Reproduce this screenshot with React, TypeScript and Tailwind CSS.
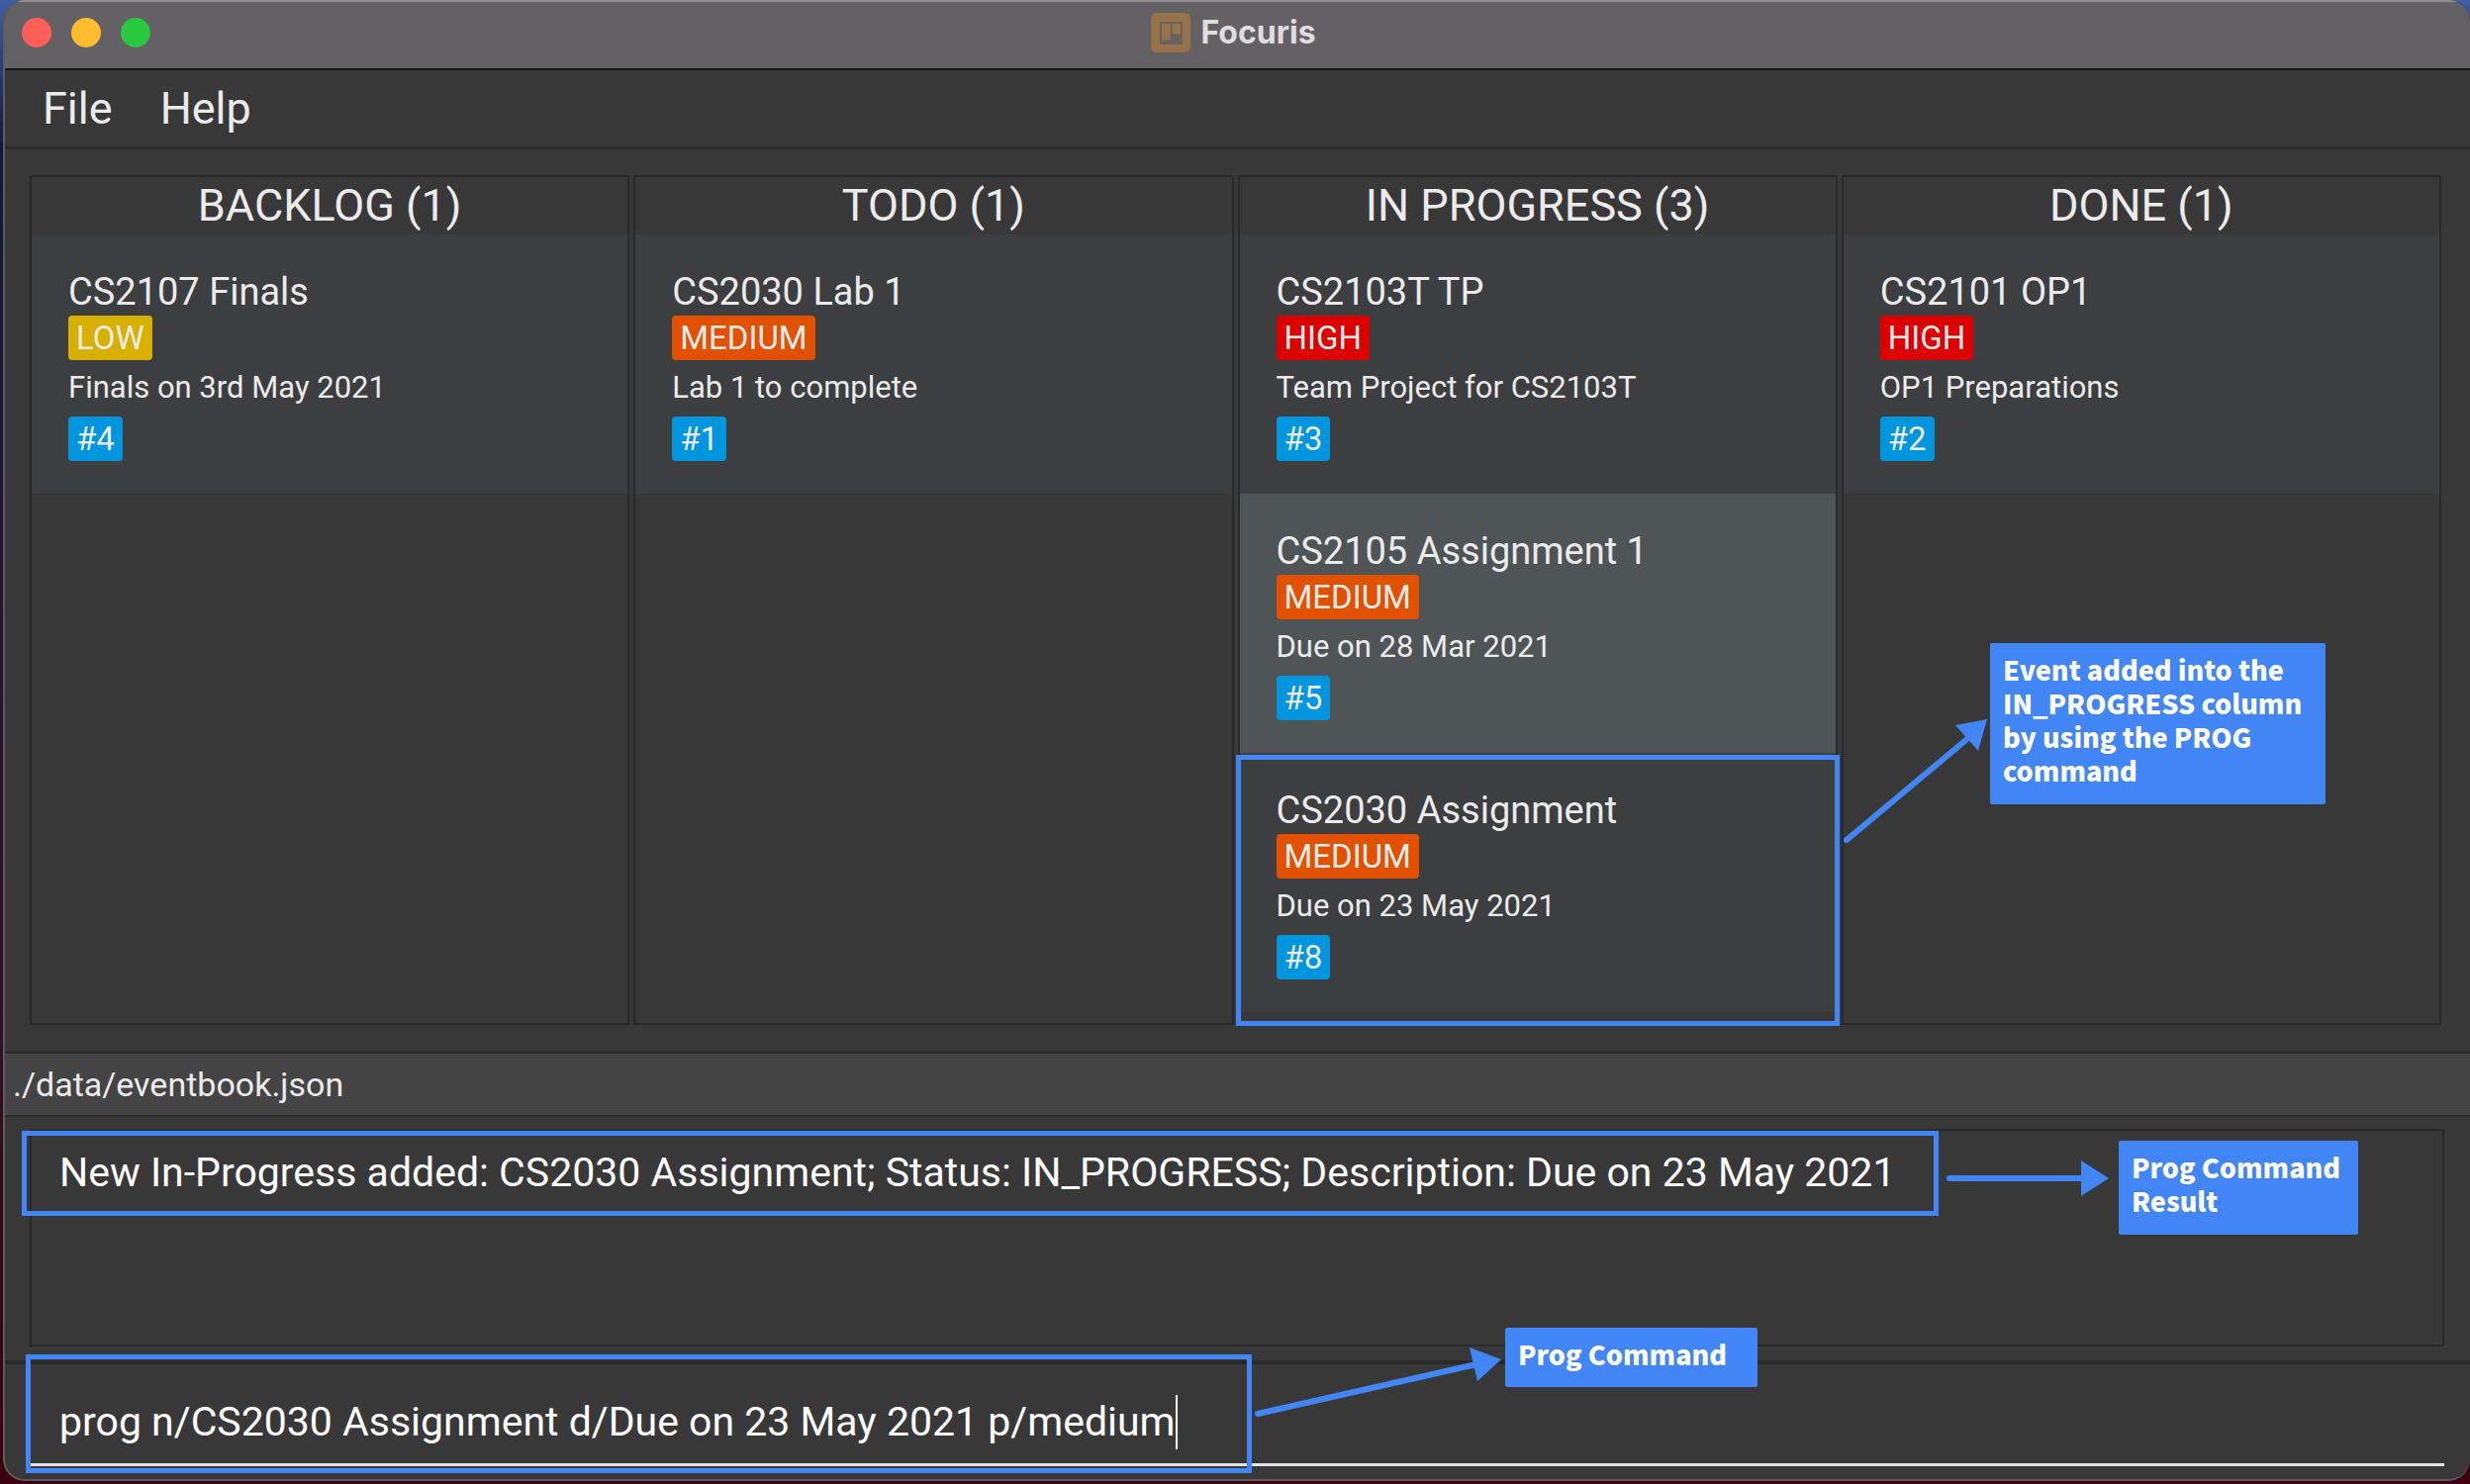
import type { ReactNode } from "react";

type Priority = "LOW" | "MEDIUM" | "HIGH";

interface EventItem {
  id: number;
  name: string;
  priority: Priority;
  description: string;
  selected?: boolean;
  highlighted?: boolean;
}

const columns: { title: string; events: EventItem[] }[] = [
  {
    title: "BACKLOG",
    events: [{ id: 4, name: "CS2107 Finals", priority: "LOW", description: "Finals on 3rd May 2021" }],
  },
  {
    title: "TODO",
    events: [{ id: 1, name: "CS2030 Lab 1", priority: "MEDIUM", description: "Lab 1 to complete" }],
  },
  {
    title: "IN PROGRESS",
    events: [
      { id: 3, name: "CS2103T TP", priority: "HIGH", description: "Team Project for CS2103T" },
      { id: 5, name: "CS2105 Assignment 1", priority: "MEDIUM", description: "Due on 28 Mar 2021", selected: true },
      { id: 8, name: "CS2030 Assignment", priority: "MEDIUM", description: "Due on 23 May 2021", highlighted: true },
    ],
  },
  {
    title: "DONE",
    events: [{ id: 2, name: "CS2101 OP1", priority: "HIGH", description: "OP1 Preparations" }],
  },
];

const priorityColor: Record<Priority, string> = {
  LOW: "bg-[#d8b100]",
  MEDIUM: "bg-[#e25100]",
  HIGH: "bg-[#dc0000]",
};

function Badge({ color, children }: { color: string; children: ReactNode }) {
  return <span className={`block w-fit rounded px-2 text-[33px] leading-[45px] ${color}`}>{children}</span>;
}

function EventCard({ event }: { event: EventItem }) {
  return (
    <li className={`relative px-[37px] pt-9 pb-[33px] ${event.selected ? "bg-[#4f5557]" : "bg-[#3c3e3f]"}`}>
      <h3 className="mb-0.5 text-[38px] leading-[44px]">{event.name}</h3>
      <Badge color={priorityColor[event.priority]}>{event.priority}</Badge>
      <p className="mb-0.5 text-[31px] leading-[55px]">{event.description}</p>
      <Badge color="bg-[#0096df]">#{event.id}</Badge>
      {event.highlighted && (
        <div className="absolute -inset-x-1 top-0.5 -bottom-3.5 border-[5px] border-[#4286f5]" />
      )}
    </li>
  );
}

function Callout({ className, children }: { className: string; children: ReactNode }) {
  return (
    <p
      className={`absolute rounded-xs bg-[#4286f5] px-[13px] pt-2.5 font-['Noto_Sans_CJK_SC',sans-serif] text-[27px] leading-[34px] font-black text-white ${className}`}
    >
      {children}
    </p>
  );
}

function AppIcon() {
  return (
    <svg viewBox="0 0 40 40" className="size-10" aria-hidden="true">
      <rect width="40" height="40" rx="6" fill="#96734a" />
      <rect x="9" y="9" width="23" height="23" fill="#68625f" />
      <rect x="11" y="11" width="8.5" height="16.5" fill="#96734a" />
      <rect x="21.5" y="11" width="8.5" height="10.5" fill="#96734a" />
    </svg>
  );
}

export default function App() {
  return (
    <div className="flex min-h-screen flex-col bg-linear-to-b from-[#3f5fa3] via-[#12173f] via-10% to-[#3d0010] pb-[3px] pl-[3px] font-[Roboto,sans-serif] text-[#ebebeb]">
      <div className="flex flex-1 flex-col overflow-hidden rounded-[22px] border-b-2 border-l-2 border-[#5c5c5c] bg-[#383838]">
        <header className="relative flex h-[71px] items-center justify-center border-t-2 border-b-2 border-t-[#929093] border-b-[#171717] bg-[#646164] pr-2 pb-1.5">
          <div className="absolute left-[17px] flex gap-5">
            <button aria-label="Close" className="size-[30px] rounded-full bg-[#ff5f57]" />
            <button aria-label="Minimize" className="size-[30px] rounded-full bg-[#febc2e]" />
            <button aria-label="Maximize" className="size-[30px] rounded-full bg-[#28c840]" />
          </div>
          <h1 className="flex items-center gap-2.5 font-[Inter,sans-serif] text-[32px] font-bold text-[#dfdde0]">
            <AppIcon />
            Focuris
          </h1>
        </header>

        <nav className="flex h-20 items-center gap-12 border-b-[3px] border-[#2c2c2c] pl-[38px] text-[45px]">
          <button>File</button>
          <button>Help</button>
        </nav>

        <main className="relative grid flex-1 grid-cols-4 gap-1 pt-[26px] pr-[29px] pb-[26px] pl-[25px]">
          {columns.map((column) => (
            <section key={column.title} className="border-2 border-[#2a2a2a]">
              <h2 className="text-center text-[45px] leading-[58px]">
                {column.title} ({column.events.length})
              </h2>
              <ul>
                {column.events.map((event) => (
                  <EventCard key={event.id} event={event} />
                ))}
              </ul>
            </section>
          ))}
          <svg
            viewBox="0 0 150 140"
            className="absolute top-[571px] right-[485px] h-[140px] w-[150px]"
            fill="#4286f5"
            aria-hidden="true"
          >
            <path d="M5 127 L128 24" stroke="#4286f5" strokeWidth="6" strokeLinecap="round" />
            <path d="M147 5 L115 11 L138 37 Z" />
          </svg>
          <Callout className="top-[499px] right-[146px] h-[163px] w-[339px]">
            Event added into the IN_PROGRESS column by using the PROG command
          </Callout>
        </main>

        <footer className="flex h-[67px] items-center border-t-[3px] border-b-2 border-[#2c2c2c] bg-[#444444] pl-2 text-[34px]">
          ./data/eventbook.json
        </footer>

        <section className="relative pt-3 pr-[26px] pb-3.5 pl-[25px]">
          <output className="block h-[220px] border-2 border-[#2a2a2a] px-7 pt-3.5 text-[41px] leading-[56px] whitespace-nowrap text-white">
            New In-Progress added: CS2030 Assignment; Status: IN_PROGRESS; Description: Due on 23 May 2021
          </output>
          <div className="absolute top-3.5 left-[17px] h-[86px] w-[1937px] border-[5px] border-[#4286f5]" />
          <svg
            viewBox="0 0 170 40"
            className="absolute top-[42px] right-[363px] h-10 w-[170px]"
            fill="#4286f5"
            aria-hidden="true"
          >
            <path d="M7 20 H145" stroke="#4286f5" strokeWidth="6" strokeLinecap="round" />
            <path d="M140 2 V38 L168 20 Z" />
          </svg>
          <Callout className="top-6 right-[113px] h-[95px] w-[242px]">Prog Command Result</Callout>
        </section>

        <section className="relative border-t-4 border-[#2a2a2a] pt-[13px] pr-[26px] pb-[13px] pl-[25px]">
          <label className="flex h-[90px] items-center border-b-[3px] border-[#e4e2e2] pt-1 pl-[30px]">
            <input
              aria-label="Command"
              defaultValue="prog n/CS2030 Assignment d/Due on 23 May 2021 p/medium"
              className="[field-sizing:content] text-[41px] text-white outline-none"
            />
            <span className="h-[55px] w-0.5 bg-white" />
          </label>
          <div className="absolute -top-2.5 bottom-1.5 left-[21px] w-[1239px] border-[5px] border-[#4286f5]" />
          <svg
            viewBox="0 0 260 80"
            className="absolute -top-6 left-[1255px] h-20 w-[260px]"
            fill="#4286f5"
            aria-hidden="true"
          >
            <path d="M11 74 L232 24" stroke="#4286f5" strokeWidth="6" strokeLinecap="round" />
            <path d="M257 19 L225 7 L233 41 Z" />
          </svg>
          <Callout className="-top-[37px] left-[1516px] h-[60px] w-[255px]">Prog Command</Callout>
        </section>
      </div>
    </div>
  );
}
